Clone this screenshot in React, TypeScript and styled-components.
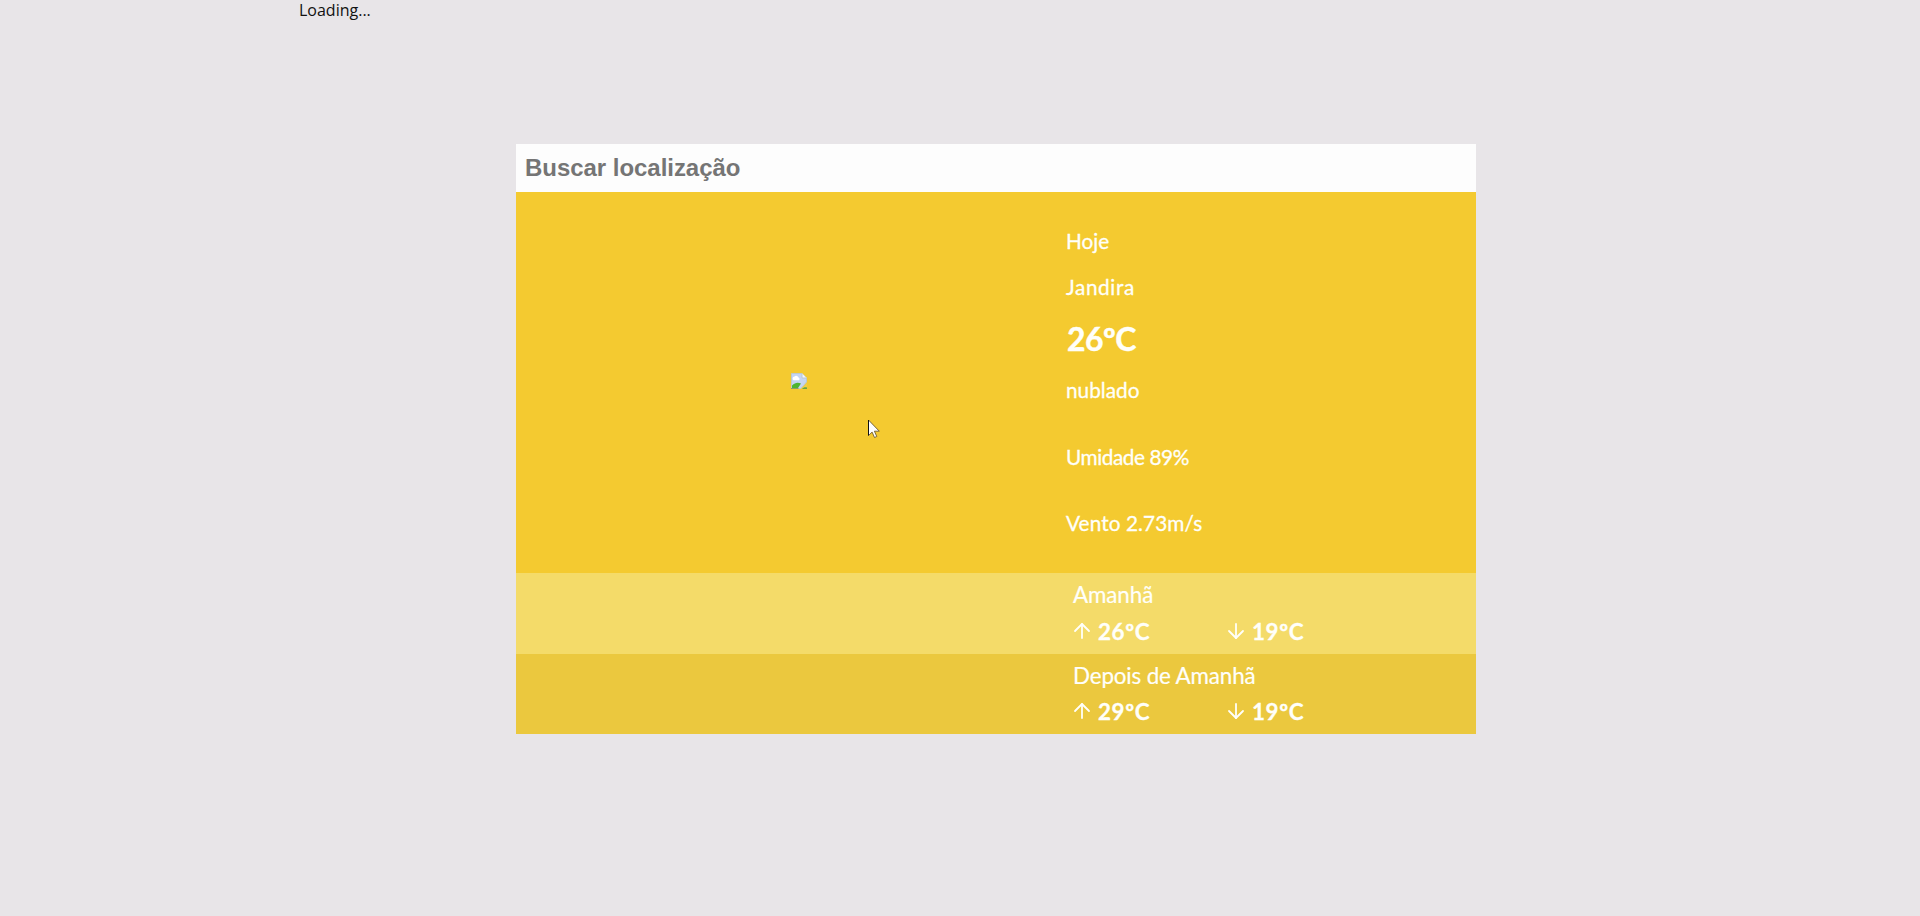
import React from "react";
import styled, { createGlobalStyle } from "styled-components";
import { ArrowDown, ArrowUp } from "lucide-react";

const GlobalStyle = createGlobalStyle`
  * { box-sizing: border-box; }
  body {
    margin: 0;
    background: #e8e5e8;
    font-family: Lato, sans-serif;
    overflow: hidden;
  }
`;

const Page = styled.div`
  position: relative;
  width: 1320px;
  height: 916px;
  margin: 0 auto;
  display: flex;
  flex-direction: column;
`;

const Status = styled.div`
  height: 144px;
  margin-left: -1px;
  font: 400 16px/20px "Open Sans", sans-serif;
  color: #111;
`;

const Card = styled.main`
  width: 960px;
  margin-left: 216px;
  display: flex;
  flex-direction: column;
  color: #fffffa;
`;

const SearchInput = styled.input`
  height: 48px;
  padding: 0 9px;
  border: 0;
  outline: 0;
  border-radius: 0;
  background: #fdfdfd;
  font: 700 24px/48px "Liberation Sans", Arial, sans-serif;
  letter-spacing: -0.04px;
  color: #757575;
  &::placeholder { color: #757575; opacity: 1; }
`;

const Today = styled.section`
  display: grid;
  grid-template-columns: 550px 1fr;
  height: 381px;
  background: #f4ca30;
`;

const Picture = styled.div`
  padding: 181px 0 0 275px;
`;

const Details = styled.div`
  padding-top: 33px;
`;

const Line = styled.p<{ $gap?: number; $spacing?: number }>`
  margin: ${({ $gap = 0 }) => $gap}px 0 0;
  font-size: 20.8px;
  line-height: 32px;
  letter-spacing: ${({ $spacing = 0 }) => $spacing}px;
  -webkit-text-stroke: 0.3px currentColor;
`;

const Temperature = styled.p`
  margin: 16px 0 -1px 1px;
  font-size: 32px;
  font-weight: 700;
  line-height: 40px;
  letter-spacing: -0.6px;
  -webkit-text-stroke: 0.4px currentColor;
`;

const Forecast = styled.section<{ $tone: string; $height: number }>`
  height: ${({ $height }) => $height}px;
  padding: 7px 0 0 557px;
  background: ${({ $tone }) => $tone};
`;

const ForecastTitle = styled.p<{ $spacing?: number }>`
  margin: 0;
  font-size: 22.4px;
  line-height: 30px;
  letter-spacing: ${({ $spacing = 0 }) => $spacing}px;
  -webkit-text-stroke: 0.2px currentColor;
`;

const Range = styled.div<{ $gap: number }>`
  display: grid;
  grid-template-columns: 154px 154px;
  margin: ${({ $gap }) => $gap}px 0 0 -2px;
`;

const Extreme = styled.span`
  display: flex;
  align-items: center;
  gap: 3px;
  height: 30px;
  font-size: 22.4px;
  font-weight: 700;
  line-height: 30px;
  letter-spacing: 0.6px;
  -webkit-text-stroke: 0.3px currentColor;
  svg { flex: none; margin: -2px 1px 0 -1px; }
`;

const Pointer = styled.svg`
  position: absolute;
  left: 568px;
  top: 419px;
`;

const MissingImage = () => (
  <svg width="16" height="16" viewBox="0 0 16 16">
    <path d="M0.5 0.5H11L15.5 5V9L10 15.5H0.5Z" fill="#c5d5f3" stroke="#bcc9cf" />
    <path d="M11 .5V5h4.5" fill="#f4f7fd" stroke="#bcc9cf" />
    <path d="M2.5 7.2a2 2 0 0 1 1-3.7 2.4 2.4 0 0 1 4 1.1 1.5 1.5 0 0 1 .5 2.6Z" fill="#fff" />
    <path d="M1 15v-2.5C4 9.4 7 9 10 10.5L7 15Z" fill="#4eb432" />
    <path d="M9.5 16l6.5-6v6Z" fill="#efce48" />
    <path d="M11 16c1-1.5 3-2 5-1.5V16Z" fill="#69a744" />
    <path d="M0 15.5h7.5" stroke="#8b9c68" />
  </svg>
);

const days = [
  { name: "Amanhã", high: 26, low: 19, tone: "#f4db69", height: 81, gap: 7, spacing: -0.1 },
  { name: "Depois de Amanhã", high: 29, low: 19, tone: "#ebc83e", height: 80, gap: 6, spacing: -0.15 },
];

export default function App() {
  return (
    <>
      <GlobalStyle />
      <Page>
        <Status>Loading...</Status>
        <Card>
          <SearchInput placeholder="Buscar localização" />
          <Today>
            <Picture><MissingImage /></Picture>
            <Details>
              <Line>Hoje</Line>
              <Line $gap={14} $spacing={0.6}>Jandira</Line>
              <Temperature>26ºC</Temperature>
              <Line $gap={16}>nublado</Line>
              <Line $gap={35} $spacing={-0.45}>Umidade 89%</Line>
              <Line $gap={34} $spacing={0.08}>Vento 2.73m/s</Line>
            </Details>
          </Today>
          {days.map((day) => (
            <Forecast key={day.name} $tone={day.tone} $height={day.height}>
              <ForecastTitle $spacing={day.spacing}>{day.name}</ForecastTitle>
              <Range $gap={day.gap}>
                <Extreme><ArrowUp size={24} strokeWidth={1.8} />{day.high}ºC</Extreme>
                <Extreme><ArrowDown size={24} strokeWidth={1.8} />{day.low}ºC</Extreme>
              </Range>
            </Forecast>
          ))}
        </Card>
        <Pointer width="12" height="20" viewBox="0 0 12 20">
          <path d="M.5 1v15.5l3.6-3.4 2.4 5.4 2.3-1-2.4-5.3h4.9Z" fill="#fff" stroke="#6b5a35" strokeWidth=".9" />
          <path d="M.5 1v15.5" stroke="#111" />
        </Pointer>
      </Page>
    </>
  );
}
